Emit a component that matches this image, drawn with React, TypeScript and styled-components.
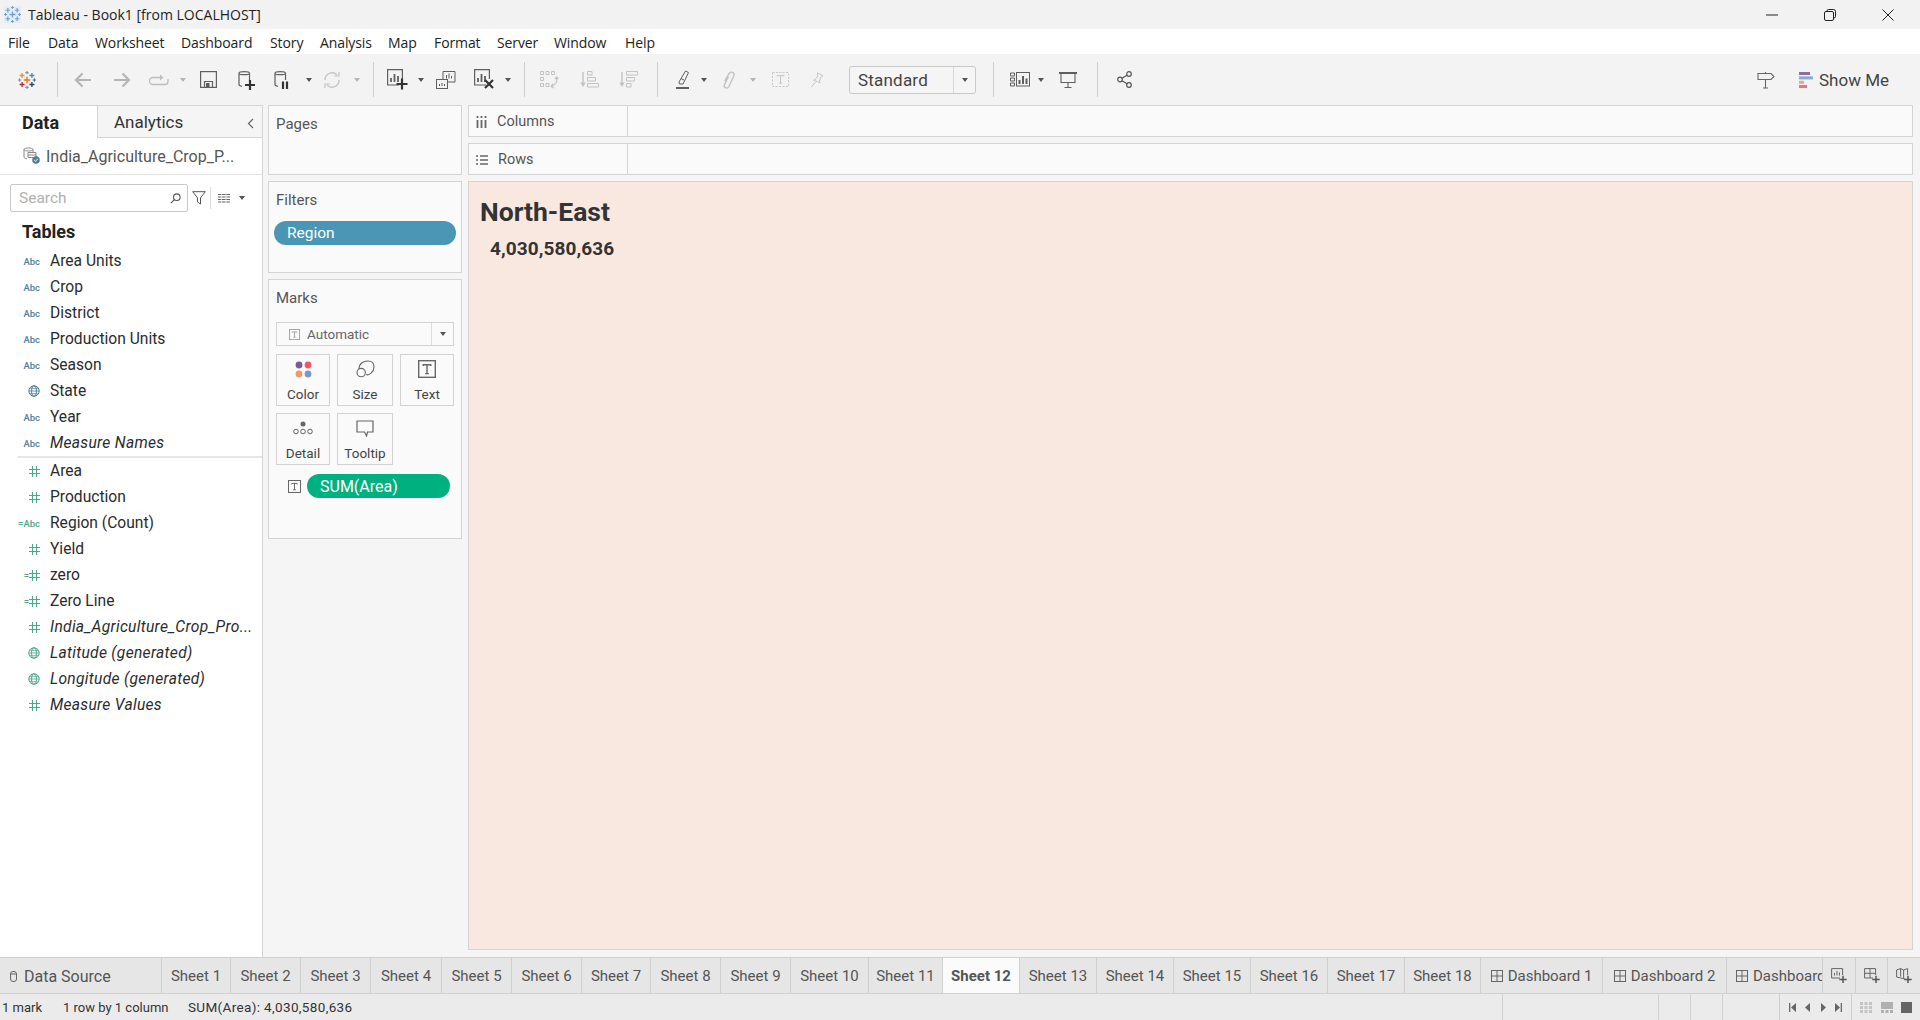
import React from 'react';
import styled, { createGlobalStyle } from 'styled-components';

const Global = createGlobalStyle`
  html, body { margin: 0; padding: 0; background: #f5f5f5; }
  * { box-sizing: border-box; }
  svg { flex: none; }
`;

const Page = styled.div`
  width: 1920px; height: 1020px; overflow: hidden;
  display: flex; flex-direction: column;
  font-family: Roboto, "Liberation Sans", sans-serif;
  color: #2b2b2b;
`;

const TitleBar = styled.div`
  height: 29px; flex: none; background: #f2f2f2;
  display: flex; align-items: center; padding-left: 4px;
  font: 14px "Open Sans", "Noto Sans", sans-serif; color: #222;
`;
const AppBadge = styled.span`
  width: 17px; height: 17px; flex: none; background: #e6ecf2; display: flex;
`;
const TitleText = styled.span` margin-left: 7px; `;
const WindowButtons = styled.div` margin-left: auto; margin-right: 3px; display: flex; `;
const WindowButton = styled.div`
  width: 58px; height: 29px; display: flex; align-items: center; justify-content: center;
`;

const MenuBar = styled.div`
  height: 25px; flex: none; background: #fff;
  display: flex; align-items: center; padding: 2px 0 0 8px;
  font: 14px "Open Sans", "Noto Sans", sans-serif; color: #222;
`;
const MenuItem = styled.span<{ $w: number }>` width: ${p => p.$w}px; letter-spacing: -0.1px; `;

const Toolbar = styled.div`
  height: 51px; flex: none; background: #f3f3f3;
  display: flex; align-items: center;
`;
const Tool = styled.div<{ $w: number }>`
  width: ${p => p.$w}px; height: 36px; flex: none;
  display: flex; align-items: center; justify-content: center;
`;
const Sep = styled.div`
  width: 1px; height: 35px; flex: none; background: #cfcfcf;
`;
const Caret = styled.div<{ $off?: boolean }>`
  width: 0; height: 0; flex: none; border-left: 3.5px solid transparent; border-right: 3.5px solid transparent;
  border-top: 4px solid ${p => (p.$off ? '#b5b5b5' : '#555')};
`;
const FitSelect = styled.div`
  width: 127px; height: 28px; margin-left: 13px; flex: none;
  border: 1px solid #c9c9c9; border-radius: 3px; background: #f5f5f5;
  display: flex; align-items: center; font-size: 17px; color: #444;
`;
const FitLabel = styled.span` flex: 1; padding-left: 8px; letter-spacing: .2px; `;
const FitArrow = styled.span`
  width: 22px; height: 100%; border-left: 1px solid #d8d8d8;
  display: flex; align-items: center; justify-content: center;
`;
const ToolSpacer = styled.div` flex: 1; `;
const ShowMe = styled.div`
  display: flex; align-items: center; gap: 6px; font-size: 17px; color: #444;
  margin-left: 21px; width: 121px;
`;

const Workspace = styled.div`
  flex: 1; min-height: 0; display: flex; background: #f5f5f5;
`;
const DataPane = styled.div`
  width: 263px; flex: none; background: #fff; border-right: 1px solid #d4d4d4;
  display: flex; flex-direction: column; position: relative;
`;
const PaneTabs = styled.div` display: flex; height: 33px; flex: none; `;
const PaneTab = styled.div<{ $active?: boolean }>`
  width: ${p => (p.$active ? 97 : 165)}px;
  padding-left: ${p => (p.$active ? 22 : 16)}px;
  display: flex; align-items: center;
  font-size: ${p => (p.$active ? 18 : 17)}px;
  font-weight: ${p => (p.$active ? 700 : 400)};
  color: ${p => (p.$active ? '#222' : '#333')};
  background: ${p => (p.$active ? '#fff' : '#f5f5f5')};
  border-top: 1px solid #d4d4d4;
  ${p => (p.$active ? '' : 'border-left: 1px solid #d4d4d4; border-bottom: 1px solid #d4d4d4;')}
`;
const Collapse = styled.div` position: absolute; right: 8px; top: 9px; `;
const SourceRow = styled.div`
  height: 37px; flex: none; display: flex; align-items: center; padding-left: 23px; gap: 5px;
  border-bottom: 1px solid #e2e2e2; font-size: 16px; color: #555; white-space: nowrap;
`;
const SearchRow = styled.div`
  height: 46px; flex: none; display: flex; align-items: center; padding: 0 0 0 10px;
`;
const SearchBox = styled.div`
  width: 178px; height: 28px; border: 1px solid #c9c9c9; border-radius: 2px;
  display: flex; align-items: center; justify-content: space-between; padding: 0 6px 0 8px;
  font-size: 15.5px; color: #b0b0b0;
`;
const SearchTool = styled.div<{ $w: number }>`
  width: ${p => p.$w}px; display: flex; align-items: center; justify-content: center;
`;
const ListTool = styled(SearchTool)` margin-right: 2px; `;
const VSep = styled.div` width: 1px; height: 22px; background: #dcdcdc; `;
const TablesHeading = styled.div`
  height: 20px; flex: none; padding-left: 22px; display: flex; align-items: center;
  font-size: 18px; font-weight: 700; color: #222; margin-bottom: 7px;
`;
const FieldList = styled.div` display: flex; flex-direction: column; `;
const Field = styled.div<{ $italic?: boolean }>`
  height: 26px; display: flex; align-items: center; font-size: 15.6px; color: #2b2b2b;
  font-style: ${p => (p.$italic ? 'italic' : 'normal')};
  letter-spacing: ${p => (p.$italic ? '.3px' : '0')};
  white-space: nowrap;
`;
const FieldIcon = styled.span<{ $tone: 'blue' | 'green' }>`
  width: 50px; padding-right: 10px; flex: none; display: flex; align-items: center; justify-content: flex-end;
  font-size: 9.5px; font-weight: 500; font-style: normal; letter-spacing: 0;
  color: ${p => (p.$tone === 'blue' ? '#4f7f9a' : '#4fa788')};
`;
const FieldRule = styled.div` height: 2px; margin-left: 18px; background: #e6e6e6; `;

const CardColumn = styled.div`
  width: 194px; flex: none; margin-left: 5px; display: flex; flex-direction: column; gap: 6px;
`;
const Card = styled.div<{ $h: number }>`
  height: ${p => p.$h}px; flex: none; background: #fafafa; border: 1px solid #d4d4d4;
  padding: 9px 6px 0 6px; display: flex; flex-direction: column;
`;
const CardLabel = styled.div`
  font-size: 15px; color: #555; padding-left: 1px; height: 18px; line-height: 18px;
`;
const Pill = styled.div<{ $tone: 'blue' | 'green' }>`
  height: 24px; border-radius: 12px; color: #fff;
  display: flex; align-items: center; flex: none;
  background: ${p => (p.$tone === 'blue' ? '#4b96b4' : '#00b180')};
`;
const RegionPill = styled(Pill)` margin: 12px -1px 0 -1px; padding-left: 13px; font-size: 15.5px; `;
const MarkSelect = styled.div`
  margin: 15px 1px 0 1px; height: 24px; border: 1px solid #d2d2d2; background: #fafafa;
  display: flex; align-items: center; font-size: 13.5px; color: #666;
`;
const MarkSelectLabel = styled.span` flex: 1; display: flex; align-items: center; gap: 7px; padding-left: 12px; `;
const MarkSelectArrow = styled.span`
  width: 22px; height: 100%; border-left: 1px solid #dcdcdc;
  display: flex; align-items: center; justify-content: center;
`;
const MarkGrid = styled.div`
  margin: 8px 1px 0 1px; display: grid; grid-template-columns: 54px 56px 54px;
  column-gap: 7px; row-gap: 7px; grid-auto-rows: 52px;
`;
const MarkButton = styled.div`
  border: 1px solid #d2d2d2; display: flex; flex-direction: column; align-items: center;
  font-size: 13.5px; color: #444; padding-top: 2px;
`;
const MarkIcon = styled.div` height: 24px; display: flex; align-items: center; justify-content: center; `;
const MarkLabel = styled.span` margin-top: 5px; `;
const ShelfMark = styled.div` display: flex; align-items: center; margin: 9px 5px 0 0; `;
const ShelfIcon = styled.span` width: 32px; flex: none; display: flex; justify-content: center; padding-left: 7px; `;
const SumPill = styled(Pill)` flex: 1; padding-left: 13px; font-size: 16px; `;

const Stage = styled.div`
  width: 1445px; flex: none; margin-left: 6px; display: flex; flex-direction: column; gap: 6px;
`;
const Shelf = styled.div`
  height: 32px; flex: none; background: #fafafa; border: 1px solid #d4d4d4; display: flex;
`;
const ShelfName = styled.div`
  width: 159px; flex: none; border-right: 1px solid #d4d4d4; display: flex; align-items: center;
  font-size: 14.5px; color: #555; padding: 1px 0 0 7px; gap: 10px;
`;
const Viewport = styled.div`
  width: 100%; height: 769px; flex: none; background: #f9e8e0; border: 1px solid #d4d4d4;
  padding: 14px 0 0 11px;
`;
const VizTitle = styled.div`
  font-size: 26.5px; font-weight: 700; color: #333; line-height: 32px;
`;
const VizValue = styled.div`
  font-size: 19px; font-weight: 700; color: #333; margin: 9px 0 0 10px; line-height: 24px; letter-spacing: .1px;
`;

const TabBar = styled.div`
  height: 37px; flex: none; background: #e6e6e6; display: flex;
  border-top: 1px solid #d0d0d0; border-bottom: 1px solid #d0d0d0; font-size: 15px; color: #555;
`;
const SheetTab = styled.div<{ $w: number; $active?: boolean }>`
  width: ${p => p.$w}px; flex: none; display: flex; align-items: center; justify-content: center; gap: 5px;
  padding-top: 1px;
  border-right: 1px solid #cfcfcf; white-space: nowrap; overflow: hidden;
  background: ${p => (p.$active ? '#fbfbfb' : 'transparent')};
  font-weight: ${p => (p.$active ? 700 : 400)};
`;
const ClippedTab = styled(SheetTab)` justify-content: flex-start; padding-left: 9px; `;
const SourceTab = styled(SheetTab)` justify-content: flex-start; padding-left: 10px; gap: 7px; font-size: 16px; `;
const NewTab = styled.div`
  flex: 1; display: flex; align-items: center; justify-content: center; border-right: 1px solid #cfcfcf;
  &:last-child { border-right: 0; }
`;

const StatusBar = styled.div`
  height: 26px; flex: none; background: #ebebeb; display: flex; align-items: center;
  font-size: 13px; color: #333; white-space: nowrap;
`;
const StatusText = styled.span<{ $w: number }>`
  width: ${p => p.$w}px; flex: none; padding-left: 2px;
`;
const StatusValue = styled(StatusText)` font-size: 13.5px; letter-spacing: .35px; `;
const StatusCell = styled.div<{ $w: number }>`
  width: ${p => p.$w}px; height: 100%; flex: none; border-left: 1px solid #d0d0d0;
  display: flex; align-items: center; justify-content: space-evenly;
`;

const Plus = ({ x, y, s, c, w = 1.6 }: { x: number; y: number; s: number; c: string; w?: number }) => (
  <path d={`M${x - s} ${y}H${x + s}M${x} ${y - s}V${y + s}`} stroke={c} strokeWidth={w} fill="none" />
);

const TableauLogo = ({ size = 22, mono = false }: { size?: number; mono?: boolean }) => {
  const m = (c: string) => (mono ? '#6fa3d0' : c);
  return (
    <svg width={size} height={size} viewBox="0 0 22 22">
      <Plus x={11} y={11} s={4} c={m('#e8762d')} w={1.8} />
      <Plus x={5} y={5.5} s={3} c={m('#eb912c')} />
      <Plus x={17} y={5.5} s={3} c={m('#5b879b')} />
      <Plus x={5} y={16.5} s={3} c={m('#c72035')} />
      <Plus x={17} y={16.5} s={3} c={m('#1f457e')} />
      <Plus x={11} y={2} s={2} c={m('#7099a6')} w={1.3} />
      <Plus x={11} y={20} s={2} c={m('#7099a6')} w={1.3} />
      <Plus x={2} y={11} s={2} c={m('#7099a6')} w={1.3} />
      <Plus x={20} y={11} s={2} c={m('#5b6591')} w={1.3} />
    </svg>
  );
};

const Off = '#bdbdbd';
const On = '#5f5f5f';

const Arrow = ({ dir }: { dir: 'l' | 'r' }) => (
  <svg width="18" height="16" viewBox="0 0 18 16" fill="none" stroke="#b5b5b5" strokeWidth="2.2">
    {dir === 'l' ? <path d="M17 8H2M8.5 1.5 2 8l6.5 6.5" /> : <path d="M1 8h15M9.5 1.5 16 8l-6.5 6.5" />}
  </svg>
);
const RedoIcon = () => (
  <svg width="20" height="14" viewBox="0 0 20 14" fill="none" stroke={Off} strokeWidth="1.3">
    <path d="M13 4.5H4a3 3 0 0 0 0 7h12a3 3 0 0 0 3-3V6" />
    <path d="M11 1.5 14.5 4.5 11 7.5" fill={Off} stroke="none" />
  </svg>
);
const SaveIcon = () => (
  <svg width="17" height="17" viewBox="0 0 17 17" fill="none" stroke={On} strokeWidth="1.2">
    <rect x=".6" y=".6" width="15.8" height="15.8" />
    <path d="M4.5 16v-5.5h8V16" />
    <rect x="6" y="12" width="3.5" height="4" fill={On} stroke="none" />
  </svg>
);
const CylIcon = ({ pause }: { pause?: boolean }) => (
  <svg width="20" height="20" viewBox="0 0 20 20" fill="none">
    <path d="M1 3.2C1 1.2 11.5 1.2 11.5 3.2M1 3.2C1 5.2 11.5 5.2 11.5 3.2M1 3.2V14.5c0 1 1.2 1.6 3 1.8M11.5 3.2V10" stroke={On} strokeWidth="1.2" />
    {pause ? (
      <path d="M9 11.5V19M13 11.5V19" stroke="#333" strokeWidth="2.2" />
    ) : (
      <Plus x={12} y={15} s={5} c="#333" w={2.2} />
    )}
  </svg>
);
const RefreshIcon = () => (
  <svg width="18" height="18" viewBox="0 0 18 18" fill="none" stroke="#c6c6c6" strokeWidth="1.4">
    <path d="M2 9a7 7 0 0 1 12-5M16 9a7 7 0 0 1-12 5" />
    <path d="M11 5h5V1M7 13H2v4" fill="none" strokeWidth="1.2" />
  </svg>
);
const SheetIcon = ({ badge }: { badge?: 'plus' | 'x' }) => (
  <svg width="21" height="21" viewBox="0 0 21 21" fill="none">
    <path d="M12 16H.6V.6h14.8V10" stroke={On} strokeWidth="1.2" />
    <path d="M4 13V9M7.5 13V5M11 13V7" stroke={On} strokeWidth="1.8" />
    {badge === 'plus' && <Plus x={15} y={15} s={5.5} c="#333" w={2.2} />}
    {badge === 'x' && <path d="M11 11l8 8M19 11l-8 8" stroke="#333" strokeWidth="2.2" />}
  </svg>
);
const DupIcon = () => (
  <svg width="20" height="18" viewBox="0 0 20 18" fill="none" stroke={On} strokeWidth="1">
    <path d="M7 8V.5h12v10.5H12" />
    <path d="M10.5 7.5V4M13 7.5V2.5M15.5 7.5V5" />
    <rect x=".5" y="8.5" width="11" height="9" />
    <path d="M3.5 15v-2M6 15v-3M8.5 15v-2" />
  </svg>
);
const SwapIcon = () => (
  <svg width="20" height="18" viewBox="0 0 20 18" fill="none" stroke="#c2c2c2" strokeWidth="1">
    <path d="M.5.5h3v3h-3zM6 .5h3v3H6zM11.5.5h3v3h-3zM.5 6.5h3v3h-3zM.5 12.5h3v3h-3zM6 12.5h3v3H6z" />
    <path d="M16.5 7c1 4-1.5 7-5 8.5M13 12.5l-2 3 3 1.5M15 8l1.5-2 2 2" strokeWidth="1.2" />
  </svg>
);
const SortIcon = ({ desc }: { desc?: boolean }) => (
  <svg width="19" height="17" viewBox="0 0 19 17" fill="none" stroke="#c2c2c2" strokeWidth="1">
    <path d="M3 1v13" strokeWidth="1.4" />
    <path d="M.3 11.5h5.4L3 16z" fill="#c2c2c2" stroke="none" />
    {desc ? (
      <path d="M7.5.5h11V4h-11zM7.5 6.5h8V10h-8zM7.5 12.5H12V16H7.5z" />
    ) : (
      <path d="M7.5.5H12V4H7.5zM7.5 6.5h8V10h-8zM7.5 12.5h11V16h-11z" />
    )}
  </svg>
);
const HighlightIcon = () => (
  <svg width="14" height="19" viewBox="0 0 14 19" fill="none" stroke={On} strokeWidth="1">
    <path d="M3 12 9.5 1l3 1.6L7 14H3.5z" />
    <path d="M5 8.5l3 1.6" />
    <path d="M0 18h13" strokeWidth="2" />
  </svg>
);
const ClipIcon = () => (
  <svg width="14" height="20" viewBox="0 0 13 18" fill="none" stroke="#c2c2c2" strokeWidth="1.3">
    <path d="M2.5 10 6.5 3c1.6-2.5 5.5-1 4.5 2L6.5 15c-1.3 2.5-5 1.500-4.500-1.200L6 6" />
  </svg>
);
const TextBoxIcon = () => (
  <svg width="17" height="15" viewBox="0 0 17 15" fill="none" stroke="#c6c6c6">
    <rect x=".5" y=".5" width="16" height="14" strokeDasharray="2 1.4" />
    <path d="M5 4.5V3.6h7v.9M8.5 3.6v7.6M7 11.2h3" />
  </svg>
);
const PinIcon = () => (
  <svg width="14" height="16" viewBox="0 0 14 16" fill="none" stroke="#c6c6c6">
    <path d="M7.5.8 13 3.8l-2.5 1.4-1 4 .8 1.6L3.5 8.2l1.6-.5 2.6-3.600zM5.500 10 1.500 15" />
  </svg>
);
const ShowMeIcon = () => (
  <svg width="20" height="15" viewBox="0 0 20 15" fill="none" stroke={On}>
    <path d="M.5 1h4v3h-4zM.5 6h4v3h-4zM.5 11h4v3h-4z" strokeWidth="1" />
    <rect x="6.5" y=".5" width="13" height="13.5" strokeWidth="1" />
    <path d="M9.5 12V8M13 12V4M16.5 12V6.5" strokeWidth="2" />
  </svg>
);
const PresentIcon = () => (
  <svg width="18" height="16" viewBox="0 0 18 16" fill="none" stroke={On}>
    <path d="M0 1h18" strokeWidth="2" />
    <path d="M2 1.5v9h14v-9M9 10.5V15M5.5 15.5h7" strokeWidth="1.1" />
  </svg>
);
const ShareIcon = () => (
  <svg width="15" height="17" viewBox="0 0 15 17" fill="none" stroke="#555" strokeWidth="1.2">
    <circle cx="12" cy="3" r="2.3" /><circle cx="3" cy="8.5" r="2.3" /><circle cx="12" cy="14" r="2.3" />
    <path d="M10 4.3 5 7.3M5 9.7l5 3" />
  </svg>
);
const SignIcon = () => (
  <svg width="18" height="18" viewBox="0 0 18 18" fill="none" stroke="#666" strokeWidth="1.1">
    <path d="M1 2.5h13l3 3-3 3H1zM8.5 1v1.5M8.5 8.5V17M6 17h5" />
  </svg>
);
const ShowMeBars = () => (
  <svg width="14" height="16" viewBox="0 0 14 16">
    <rect x="0" y="0" width="11" height="3" fill="#8a6f9c" />
    <rect x="0" y="4.4" width="14" height="3" fill="#86abd2" />
    <rect x="0" y="8.8" width="5" height="3" fill="#eda779" />
    <rect x="0" y="13" width="8" height="3" fill="#f1707f" />
  </svg>
);
const WinMin = () => <svg width="12" height="2"><path d="M0 1h12" stroke="#222" /></svg>;
const WinMax = () => (
  <svg width="12" height="12" fill="none" stroke="#222"><path d="M3 2.5V2A1.5 1.5 0 0 1 4.5.5h5a2 2 0 0 1 2 2v5A1.5 1.5 0 0 1 10 9h-.5" /><rect x=".5" y="2.5" width="9" height="9" rx="1.5" /></svg>
);
const WinClose = () => <svg width="12" height="12" fill="none" stroke="#222"><path d="M.5.5l11 11M11.5.5l-11 11" /></svg>;

const Chevron = () => <svg width="7" height="11" fill="none" stroke="#666" strokeWidth="1.2"><path d="M6 1 1.5 5.5 6 10" /></svg>;
const SourceIcon = () => (
  <svg width="18" height="18" viewBox="0 0 18 18" fill="none" stroke="#888">
    <path d="M1 2.5C1 .5 10 .5 10 2.5S1 4.5 1 2.5zM1 2.5V10c0 1 1 1.6 3 1.8M10 2.5V5M5 5.500h8v5H5zM5 8h8" />
    <circle cx="13" cy="13" r="3.8" fill="#4f7f9a" stroke="none" />
    <path d="M11.2 13l1.3 1.3 2.2-2.4" stroke="#fff" strokeWidth="1" />
  </svg>
);
const SearchGlass = () => (
  <svg width="11" height="11" fill="none" stroke="#555" strokeWidth="1.1"><circle cx="6.8" cy="4.2" r="3.3" /><path d="M4.4 6.6.8 10.2" /></svg>
);
const FunnelIcon = () => (
  <svg width="14" height="14" fill="none" stroke="#555"><path d="M.7.7h12.6L8.5 6.8V13l-3-2V6.8z" /></svg>
);
const ListGridIcon = () => (
  <svg width="12" height="9"><path d="M0 .5h12M0 3h12M0 5.5h12M0 8h12" stroke="#666" strokeWidth="1.2" /><path d="M3.5 0v9M8 0v9" stroke="#fff" strokeWidth=".7" /></svg>
);
const Globe = ({ c }: { c: string }) => (
  <svg width="12" height="12" viewBox="0 0 12 12" fill="none" stroke={c} strokeWidth="1">
    <circle cx="6" cy="6" r="5.2" /><ellipse cx="6" cy="6" rx="2.4" ry="5.2" /><path d="M.8 6h10.4M1.6 3.3h8.8M1.6 8.7h8.800" strokeWidth=".8" />
  </svg>
);
const Hash = () => (
  <svg width="11" height="11" viewBox="0 0 11 11" fill="none" stroke="#4fa788" strokeWidth="1.1">
    <path d="M3.5 0v11M7.5 0v11M0 3.5h11M0 7.5h11" />
  </svg>
);
const TBox = ({ s = 13, c = '#666' }: { s?: number; c?: string }) => (
  <svg width={s} height={s} viewBox="0 0 13 13" fill="none" stroke={c}>
    <rect x=".5" y=".5" width="12" height="12" />
    <path d="M3.8 4.4v-1h5.400v1M6.500 3.400v6.400M5.200 9.800h2.600" />
  </svg>
);
const ColorDots = () => (
  <svg width="17" height="17"><circle cx="4" cy="4" r="3.4" fill="#7b5c92" /><circle cx="13" cy="4" r="3.4" fill="#f0566a" /><circle cx="4" cy="13" r="3.4" fill="#ee9a62" /><circle cx="13" cy="13" r="3.4" fill="#6f9bcf" /></svg>
);
const SizeIcon = () => (
  <svg width="19" height="18" fill="none" stroke="#666" strokeWidth="1.1">
    <circle cx="5.2" cy="12.6" r="4.2" />
    <path d="M3 9c0-6 5-8 9-8 4 0 6 2.500 6 6 0 5-5 9-8 7.500" />
  </svg>
);
const TipIcon = () => (
  <svg width="18" height="17" fill="none" stroke="#666" strokeWidth="1.2"><path d="M1 1h16v11h-5.500l-1 4-2-4H1z" /></svg>
);
const DetailIcon = () => (
  <svg width="20" height="14" fill="none" stroke="#666"><circle cx="10" cy="3" r="2.5" fill="#666" stroke="none" /><circle cx="3" cy="10.5" r="2.3" /><circle cx="10" cy="10.5" r="2.3" /><circle cx="17" cy="10.5" r="2.3" /></svg>
);
const ColumnsGlyph = () => <svg width="11" height="12"><path d="M1.5 4v8M5.5 4v8M9.5 4v8M1.5 0v2M5.5 0v2M9.5 0v2" stroke="#666" strokeWidth="1.8" /></svg>;
const RowsGlyph = () => <svg width="12" height="10"><path d="M0 1h2M4 1h8M0 5h2M4 5h8M0 9h2M4 9h8" stroke="#666" strokeWidth="1.6" /></svg>;
const CylTab = () => (
  <svg width="7" height="11" fill="none" stroke="#666"><rect x=".5" y=".5" width="6" height="10" rx="2.5" /><path d="M.5 3h6" /></svg>
);
const DashGrid = () => (
  <svg width="12" height="12" fill="none" stroke="#666"><rect x=".5" y=".5" width="11" height="11" /><path d="M6 .5v11M.5 6h11" /></svg>
);
const NewSheetTab = () => (
  <svg width="16" height="15" fill="none"><path d="M9 10H.6V.6h11V7" stroke="#666" /><path d="M3.5 7.5V5M6 7.5V3M8.5 7.500V4.500" stroke="#666" /><Plus x={12} y={11.5} s={3.7} c="#555" w={1.5} /></svg>
);
const NewDashTab = () => (
  <svg width="16" height="15" fill="none"><path d="M9 10H.6V.6h11V7M6 .6V10M.6 5.3h11" stroke="#666" /><Plus x={12} y={11.5} s={3.7} c="#555" w={1.5} /></svg>
);
const NewStoryTab = () => (
  <svg width="16" height="15" fill="none"><path d="M9 11 .6 9V2l4-1.400 3 1.400 4-1.400V7M4.600 .6v8M7.600 2v8" stroke="#666" /><Plus x={12} y={11.5} s={3.7} c="#555" w={1.5} /></svg>
);
const NavIcon = ({ kind }: { kind: 'first' | 'prev' | 'next' | 'last' }) => (
  <svg width="7" height="9" fill="#666">
    {kind === 'first' && <path d="M0 0h1.3v9H0zM7 0v9L2 4.5z" />}
    {kind === 'prev' && <path d="M6 0v9L1 4.5z" />}
    {kind === 'next' && <path d="M1 0v9l5-4.5z" />}
    {kind === 'last' && <path d="M7 0H5.700v9H7zM0 0v9l5-4.500z" />}
  </svg>
);
const ViewSmall = () => (
  <svg width="12" height="11" fill="#c4c4c4"><path d="M0 0h3v3H0zM4.5 0h3v3h-3zM9 0h3v3H9zM0 4h3v3H0zM4.5 4h3v3h-3zM9 4h3v3H9zM0 8h3v3H0zM4.5 8h3v3h-3zM9 8h3v3H9z" /></svg>
);
const ViewMid = () => (
  <svg width="12" height="11" fill="#b0b0b0"><path d="M0 0h12v7H0zM0 8h3v3H0zM4.5 8h3v3h-3zM9 8h3v3H9z" /></svg>
);
const ViewFull = () => <svg width="11" height="11"><rect width="11" height="11" fill="#666" /></svg>;

const menus: [string, number][] = [
  ['File', 40], ['Data', 47], ['Worksheet', 86], ['Dashboard', 89], ['Story', 50], ['Analysis', 68],
  ['Map', 46], ['Format', 63], ['Server', 57], ['Window', 71], ['Help', 40],
];

type F = { n: string; t: 'abc' | 'geo' | 'hash' | 'calcabc' | 'calchash' | 'geog'; i?: boolean };
const dims: F[] = [
  { n: 'Area Units', t: 'abc' }, { n: 'Crop', t: 'abc' }, { n: 'District', t: 'abc' },
  { n: 'Production Units', t: 'abc' }, { n: 'Season', t: 'abc' }, { n: 'State', t: 'geo' },
  { n: 'Year', t: 'abc' }, { n: 'Measure Names', t: 'abc', i: true },
];
const meas: F[] = [
  { n: 'Area', t: 'hash' }, { n: 'Production', t: 'hash' }, { n: 'Region (Count)', t: 'calcabc' },
  { n: 'Yield', t: 'hash' }, { n: 'zero', t: 'calchash' }, { n: 'Zero Line', t: 'calchash' },
  { n: 'India_Agriculture_Crop_Pro...', t: 'hash', i: true }, { n: 'Latitude (generated)', t: 'geog', i: true },
  { n: 'Longitude (generated)', t: 'geog', i: true }, { n: 'Measure Values', t: 'hash', i: true },
];

const FieldGlyph = ({ t }: { t: F['t'] }) => {
  switch (t) {
    case 'abc': return <FieldIcon $tone="blue">Abc</FieldIcon>;
    case 'geo': return <FieldIcon $tone="blue"><Globe c="#4f7f9a" /></FieldIcon>;
    case 'geog': return <FieldIcon $tone="green"><Globe c="#4fa788" /></FieldIcon>;
    case 'hash': return <FieldIcon $tone="green"><Hash /></FieldIcon>;
    case 'calcabc': return <FieldIcon $tone="green">=Abc</FieldIcon>;
    default: return <FieldIcon $tone="green">=<Hash /></FieldIcon>;
  }
};

const FieldRow = ({ f }: { f: F }) => (
  <Field $italic={f.i}><FieldGlyph t={f.t} />{f.n}</Field>
);

const tabs: [string, number][] = [
  ['Sheet 1', 69], ['Sheet 2', 70], ['Sheet 3', 70], ['Sheet 4', 71], ['Sheet 5', 70], ['Sheet 6', 70],
  ['Sheet 7', 69], ['Sheet 8', 70], ['Sheet 9', 70], ['Sheet 10', 78], ['Sheet 11', 74], ['Sheet 12', 77],
  ['Sheet 13', 77], ['Sheet 14', 77], ['Sheet 15', 77], ['Sheet 16', 77], ['Sheet 17', 77], ['Sheet 18', 76],
];

export default function App() {
  return (
    <Page>
      <Global />
      <TitleBar>
        <AppBadge><TableauLogo size={17} mono /></AppBadge>
        <TitleText>Tableau - Book1 [from LOCALHOST]</TitleText>
        <WindowButtons>
          <WindowButton><WinMin /></WindowButton>
          <WindowButton><WinMax /></WindowButton>
          <WindowButton><WinClose /></WindowButton>
        </WindowButtons>
      </TitleBar>
      <MenuBar>
        {menus.map(([m, w]) => <MenuItem key={m} $w={w}>{m}</MenuItem>)}
      </MenuBar>
      <Toolbar>
        <Tool $w={54}><TableauLogo size={18} /></Tool>
        <Tool $w={6}><Sep /></Tool>
        <Tool $w={46}><Arrow dir="l" /></Tool>
        <Tool $w={32}><Arrow dir="r" /></Tool>
        <Tool $w={42}><RedoIcon /></Tool>
        <Tool $w={6}><Caret $off /></Tool>
        <Tool $w={44}><SaveIcon /></Tool>
        <Tool $w={36}><CylIcon /></Tool>
        <Tool $w={36}><CylIcon pause /></Tool>
        <Tool $w={14}><Caret /></Tool>
        <Tool $w={32}><RefreshIcon /></Tool>
        <Tool $w={18}><Caret $off /></Tool>
        <Tool $w={14}><Sep /></Tool>
        <Tool $w={34}><SheetIcon badge="plus" /></Tool>
        <Tool $w={14}><Caret /></Tool>
        <Tool $w={36}><DupIcon /></Tool>
        <Tool $w={40}><SheetIcon badge="x" /></Tool>
        <Tool $w={8}><Caret /></Tool>
        <Tool $w={24}><Sep /></Tool>
        <Tool $w={28}><SwapIcon /></Tool>
        <Tool $w={50}><SortIcon /></Tool>
        <Tool $w={28}><SortIcon desc /></Tool>
        <Tool $w={30}><Sep /></Tool>
        <Tool $w={22}><HighlightIcon /></Tool>
        <Tool $w={20}><Caret /></Tool>
        <Tool $w={30}><ClipIcon /></Tool>
        <Tool $w={18}><Caret $off /></Tool>
        <Tool $w={36}><TextBoxIcon /></Tool>
        <Tool $w={38}><PinIcon /></Tool>
        <FitSelect>
          <FitLabel>Standard</FitLabel>
          <FitArrow><Caret /></FitArrow>
        </FitSelect>
        <Tool $w={34}><Sep /></Tool>
        <Tool $w={20}><ShowMeIcon /></Tool>
        <Tool $w={22}><Caret /></Tool>
        <Tool $w={32}><PresentIcon /></Tool>
        <Tool $w={26}><Sep /></Tool>
        <Tool $w={28}><ShareIcon /></Tool>
        <ToolSpacer />
        <Tool $w={24}><SignIcon /></Tool>
        <ShowMe><ShowMeBars />Show Me</ShowMe>
      </Toolbar>
      <Workspace>
        <DataPane>
          <PaneTabs>
            <PaneTab $active>Data</PaneTab>
            <PaneTab>Analytics</PaneTab>
          </PaneTabs>
          <Collapse><Chevron /></Collapse>
          <SourceRow><SourceIcon />India_Agriculture_Crop_P...</SourceRow>
          <SearchRow>
            <SearchBox>Search<SearchGlass /></SearchBox>
            <SearchTool $w={22}><FunnelIcon /></SearchTool>
            <VSep />
            <ListTool $w={26}><ListGridIcon /></ListTool>
            <Caret />
          </SearchRow>
          <TablesHeading>Tables</TablesHeading>
          <FieldList>
            {dims.map(f => <FieldRow key={f.n} f={f} />)}
            <FieldRule />
            {meas.map(f => <FieldRow key={f.n} f={f} />)}
          </FieldList>
        </DataPane>
        <CardColumn>
          <Card $h={70}><CardLabel>Pages</CardLabel></Card>
          <Card $h={92}>
            <CardLabel>Filters</CardLabel>
            <RegionPill $tone="blue">Region</RegionPill>
          </Card>
          <Card $h={260}>
            <CardLabel>Marks</CardLabel>
            <MarkSelect>
              <MarkSelectLabel><TBox s={11} c="#999" />Automatic</MarkSelectLabel>
              <MarkSelectArrow><Caret /></MarkSelectArrow>
            </MarkSelect>
            <MarkGrid>
              <MarkButton><MarkIcon><ColorDots /></MarkIcon><MarkLabel>Color</MarkLabel></MarkButton>
              <MarkButton><MarkIcon><SizeIcon /></MarkIcon><MarkLabel>Size</MarkLabel></MarkButton>
              <MarkButton><MarkIcon><TBox s={18} /></MarkIcon><MarkLabel>Text</MarkLabel></MarkButton>
              <MarkButton><MarkIcon><DetailIcon /></MarkIcon><MarkLabel>Detail</MarkLabel></MarkButton>
              <MarkButton><MarkIcon><TipIcon /></MarkIcon><MarkLabel>Tooltip</MarkLabel></MarkButton>
            </MarkGrid>
            <ShelfMark>
              <ShelfIcon><TBox /></ShelfIcon>
              <SumPill $tone="green">SUM(Area)</SumPill>
            </ShelfMark>
          </Card>
        </CardColumn>
        <Stage>
          <Shelf><ShelfName><ColumnsGlyph />Columns</ShelfName></Shelf>
          <Shelf><ShelfName><RowsGlyph />Rows</ShelfName></Shelf>
          <Viewport>
            <VizTitle>North-East</VizTitle>
            <VizValue>4,030,580,636</VizValue>
          </Viewport>
        </Stage>
      </Workspace>
      <TabBar>
        <SourceTab $w={162}><CylTab />Data Source</SourceTab>
        {tabs.map(([t, w]) => <SheetTab key={t} $w={w} $active={t === 'Sheet 12'}>{t}</SheetTab>)}
        <SheetTab $w={122}><DashGrid />Dashboard 1</SheetTab>
        <SheetTab $w={124}><DashGrid />Dashboard 2</SheetTab>
        <ClippedTab $w={96}><DashGrid />Dashboard 3</ClippedTab>
        <NewTab><NewSheetTab /></NewTab>
        <NewTab><NewDashTab /></NewTab>
        <NewTab><NewStoryTab /></NewTab>
      </TabBar>
      <StatusBar>
        <StatusText $w={61}>1 mark</StatusText>
        <StatusText $w={125}>1 row by 1 column</StatusText>
        <StatusValue $w={1316}>SUM(Area): 4,030,580,636</StatusValue>
        <StatusCell $w={156} />
        <StatusCell $w={32} />
        <StatusCell $w={32} />
        <StatusCell $w={57} />
        <StatusCell $w={72}>
          <NavIcon kind="first" /><NavIcon kind="prev" /><NavIcon kind="next" /><NavIcon kind="last" />
        </StatusCell>
        <StatusCell $w={69}>
          <ViewSmall /><ViewMid /><ViewFull />
        </StatusCell>
      </StatusBar>
    </Page>
  );
}
